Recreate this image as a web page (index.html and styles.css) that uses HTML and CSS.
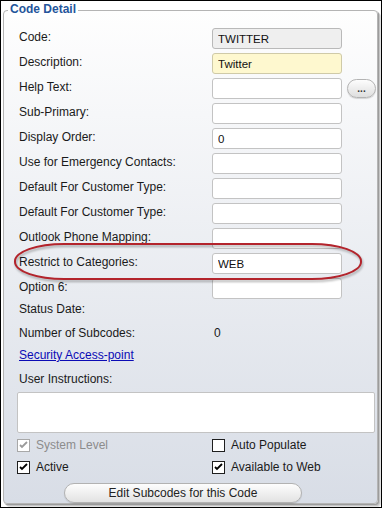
FILE: index.html
```html
<!DOCTYPE html>
<html lang="en">
<head>
    <meta charset="UTF-8">
    <title>Code Detail</title>
    <link rel="stylesheet" href="styles.css">
</head>
<body>
    <div class="panel">
        <span class="legend">Code Detail</span>

        <div class="fields">
            <label>Code:</label>
            <input class="box readonly" type="text" value="TWITTER" readonly>

            <label>Description:</label>
            <input class="box required" type="text" value="Twitter">

            <label>Help Text:</label>
            <input class="box" type="text">
            <button class="more-btn">...</button>

            <label>Sub-Primary:</label>
            <input class="box" type="text">

            <label>Display Order:</label>
            <input class="box" type="text" value="0">

            <label>Use for Emergency Contacts:</label>
            <input class="box" type="text">

            <label>Default For Customer Type:</label>
            <input class="box" type="text">

            <label>Default For Customer Type:</label>
            <input class="box" type="text">

            <label>Outlook Phone Mapping:</label>
            <input class="box" type="text">

            <label>Restrict to Categories:</label>
            <input class="box" type="text" value="WEB">

            <label>Option 6:</label>
            <input class="box" type="text">
        </div>

        <div class="plain-row status">Status Date:</div>
        <div class="plain-row pair subcodes">
            <span>Number of Subcodes:</span>
            <span class="value">0</span>
        </div>
        <div class="plain-row security"><a href="#">Security Access-point</a></div>
        <div class="plain-row instructions">User Instructions:</div>
        <textarea class="notes"></textarea>

        <div class="checks">
            <div class="check disabled">
                <span class="tick"><svg width="11" height="11" viewBox="0 0 11 11"><path d="M2 5 L4 7 L9 2" fill="none" stroke="#9a9a9a" stroke-width="1.8"/></svg></span>
                System Level
            </div>
            <div class="check">
                <span class="tick"></span>
                Auto Populate
            </div>
            <div class="check">
                <span class="tick"><svg width="11" height="11" viewBox="0 0 11 11"><path d="M2 5 L4 7 L9 2" fill="none" stroke="#000" stroke-width="1.8"/></svg></span>
                Active
            </div>
            <div class="check">
                <span class="tick"><svg width="11" height="11" viewBox="0 0 11 11"><path d="M2 5 L4 7 L9 2" fill="none" stroke="#000" stroke-width="1.8"/></svg></span>
                Available to Web
            </div>
        </div>

        <button class="edit-btn">Edit Subcodes for this Code</button>

        <!-- annotation drawn over the form -->
        <div class="highlight-ring"></div>
    </div>
</body>
</html>
```

FILE: styles.css
```css
* {
    box-sizing: border-box;
    margin: 0;
    padding: 0;
}

body {
    width: 382px;
    height: 508px;
    border: 1px solid #000;
    background: #fff;
    font-family: 'Liberation Sans', Arial, sans-serif;
    font-size: 12px;
    color: #1a1a1a;
    overflow: hidden;
}

.panel {
    position: relative;
    margin: 9px 0 0 2px;
    width: 375px;
    height: 494px;
    padding: 17px 1px 0 13px;
    border: 1px solid #b4b4b4;
    border-radius: 4px;
    background: linear-gradient(#fefefe, #d8dde6);
    box-shadow: 1px 1px 0 #9c9c9c, 2px 2px 0 #c4c4c4, 3px 3px 0 #e2e2e2;
}

.legend {
    position: absolute;
    top: -10px;
    left: 4px;
    padding: 0 2px;
    background: #fff;
    line-height: 16px;
    font-weight: bold;
    color: #24559b;
}

.fields {
    display: grid;
    grid-template-columns: 195px 130px 1fr;
    grid-auto-rows: 21px;
    row-gap: 4px;
    align-items: center;
}

.fields label {
    grid-column: 1;
    align-self: start;
    padding-left: 2px;
    line-height: 18px;
}

.box {
    grid-column: 2;
    height: 21px;
    width: 130px;
    padding: 0 5px;
    border: 1px solid #c3c3c3;
    border-radius: 3px;
    background: #fff;
    font-family: 'Liberation Sans', Arial, sans-serif;
    font-size: 11.5px;
    color: #111;
    outline: none;
}

.box.readonly {
    background: #efefef;
    border-color: #b9b9b9;
}

.box.required {
    background: #fef8cf;
    border-color: #cfcaa8;
}

.more-btn {
    grid-column: 3;
    justify-self: start;
    margin-left: 5px;
    width: 29px;
    height: 19px;
    border: 1px solid #b3b3b3;
    border-radius: 10px;
    background: linear-gradient(#fdfdfd, #dedede);
    font-family: 'Liberation Sans', Arial, sans-serif;
    font-size: 10px;
    font-weight: bold;
    line-height: 12px;
    color: #333;
    box-shadow: 0 1px 1px rgba(0, 0, 0, 0.15);
}

.plain-row {
    height: 16px;
    line-height: 16px;
    padding-left: 2px;
}

.status { margin-top: 2px; }
.subcodes { margin-top: 8px; }
.security { margin-top: 6px; }
.instructions { margin-top: 8px; }

.pair {
    display: grid;
    grid-template-columns: 195px 1fr;
}

.security a {
    color: #0b0bb5;
    text-decoration: underline;
}

.notes {
    display: block;
    margin-top: 5px;
    width: 358px;
    height: 41px;
    border: 1px solid #c3c3c3;
    border-radius: 2px;
    background: #fff;
    resize: none;
    outline: none;
}

.checks {
    display: grid;
    grid-template-columns: 195px 1fr;
    grid-auto-rows: 13px;
    row-gap: 9px;
    margin-top: 6px;
}

.check {
    display: flex;
    align-items: center;
    gap: 6px;
    line-height: 13px;
    white-space: nowrap;
}

.check.disabled {
    color: #8c8c8c;
}

.tick {
    display: flex;
    align-items: center;
    justify-content: center;
    width: 13px;
    height: 13px;
    border: 1px solid #1e1e1e;
    background: #fff;
}

.check.disabled .tick {
    border-color: #a8a8a8;
}

.edit-btn {
    display: block;
    margin: 9px 0 0 47px;
    width: 238px;
    height: 20px;
    border: 1px solid #b2b2b2;
    border-radius: 10px;
    background: linear-gradient(#fdfdfd, #e2e2e2);
    font-family: 'Liberation Sans', Arial, sans-serif;
    font-size: 12px;
    color: #222;
    box-shadow: 0 1px 1px rgba(0, 0, 0, 0.12);
}

.highlight-ring {
    position: absolute;
    left: 10px;
    top: 232px;
    width: 348px;
    height: 37px;
    border: 2px solid #b3242c;
    border-radius: 50px / 18px;
    filter: drop-shadow(1px 2px 1px rgba(0, 0, 0, 0.3));
    pointer-events: none;
}
```
